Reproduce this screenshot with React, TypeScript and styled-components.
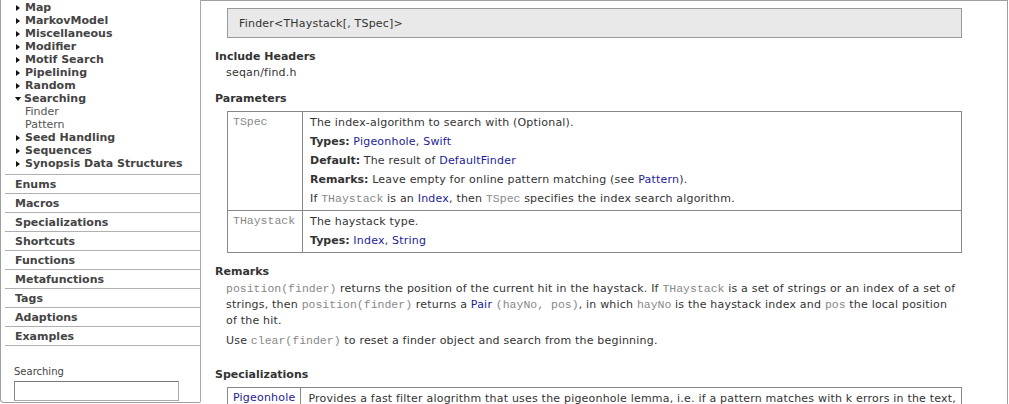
import React from "react";
import styled, { createGlobalStyle } from "styled-components";

const Global = createGlobalStyle`
  html, body { margin: 0; padding: 0; background: #fff; }
  body { font-family: "DejaVu Sans", Verdana, sans-serif; font-size: 11px; color: #333; }
  * { box-sizing: border-box; }
`;

const Page = styled.div`
  display: flex;
  width: 1009px;
  height: 404px;
  overflow: hidden;
`;

const Sidebar = styled.nav`
  width: 201px;
  height: 403px;
  flex: none;
  display: flex;
  flex-direction: column;
  border-left: 1px solid #a0a0a0;
  border-right: 1px solid #a8a8a8;
  border-bottom: 1px solid #a0a0a0;
  border-bottom-left-radius: 4px;
  border-bottom-right-radius: 2px;
`;

const Tree = styled.ul`
  list-style: none;
  margin: 0 0 0 4px;
  padding: 1px 0 4px 0;
  border-bottom: 1px solid #b0b0b0;
`;

const TreeItem = styled.li<{ $sub?: boolean }>`
  display: flex;
  align-items: center;
  height: 13px;
  line-height: 13px;
  padding-left: ${(p) => (p.$sub ? "20px" : "11px")};
  font-weight: ${(p) => (p.$sub ? "normal" : "bold")};
  color: ${(p) => (p.$sub ? "#555" : "#444")};
  white-space: nowrap;
`;

const Arrow = styled.span<{ $open?: boolean }>`
  display: inline-block;
  width: 0;
  height: 0;
  margin-right: 5px;
  ${(p) =>
    p.$open
      ? `border-left: 3.5px solid transparent; border-right: 3.5px solid transparent; border-top: 4px solid #111; margin-left: -1px; margin-right: 3px;`
      : `border-top: 3.5px solid transparent; border-bottom: 3.5px solid transparent; border-left: 4px solid #111; margin-left: 0; margin-right: 5px;`}
`;

const CatList = styled.ul`
  list-style: none;
  margin: 0 0 0 4px;
  padding: 0;
`;

const CatItem = styled.li`
  height: 19px;
  padding: 2px 0 0 10px;
  line-height: 16px;
  font-weight: bold;
  color: #444;
  border-bottom: 1px solid #b0b0b0;
`;

const SearchBox = styled.div`
  margin-top: 19px;
  padding-left: 13px;
  display: flex;
  flex-direction: column;
  gap: 3px;
`;

const SearchLabel = styled.label`
  font-size: 10px;
  line-height: 13px;
  color: #444;
`;

const SearchInput = styled.input`
  width: 165px;
  height: 20px;
  border: 1px solid #aaa;
  border-top-color: #777;
  border-left-color: #888;
  background: #fff;
  margin: 0;
  padding: 0;
`;

const Main = styled.main`
  flex: 1;
  height: 404px;
  margin-right: 1px;
  border-top: 1px solid #a0a0a0;
  border-right: 1px solid #a0a0a0;
  padding: 7px 45px 0 14px;
  overflow: hidden;
  letter-spacing: 0.2px;
`;

const TitleBox = styled.div`
  margin-left: 12px;
  height: 30px;
  background: #e9e9e9;
  border: 1px solid #999;
  padding-left: 11px;
  display: flex;
  align-items: center;
  font-size: 11px;
  color: #333;
`;

const Heading = styled.h3<{ $top?: number }>`
  margin: ${(p) => p.$top ?? 12}px 0 0 0;
  font-size: 11px;
  line-height: 14px;
  font-weight: bold;
  color: #333;
  letter-spacing: 0;
`;

const Block = styled.div`
  margin: 2px 2px 0 11px;
`;

const Plain = styled.div`
  line-height: 14px;
`;

const Para = styled.p`
  margin: 0 0 4px 0;
  line-height: 16px;
`;

const Table = styled.table`
  margin: 5px 0 0 12px;
  width: 735px;
  border-collapse: collapse;
  border: 1px solid #888;
`;

const Row = styled.tr`
  border-bottom: 1px solid #888;
`;

const KeyCell = styled.td<{ $w: number }>`
  width: ${(p) => p.$w}px;
  vertical-align: top;
  border-right: 1px solid #888;
  padding: 2px 5px 0 5px;
  line-height: 15px;
`;

const ValCell = styled.td`
  vertical-align: top;
  padding: 3px 4px 0 7px;
`;

const CellLine = styled.p`
  margin: 0 0 4px 0;
  line-height: 15px;
`;

const Code = styled.code`
  font-family: "Liberation Mono", "Courier New", monospace;
  font-size: 11.5px;
  letter-spacing: 0;
  color: #888;
`;

const Link = styled.a`
  color: #1c1c98;
  text-decoration: none;
`;

const Label = styled.b`
  color: #333;
  letter-spacing: 0;
`;

const tree: { label: string; open?: boolean; sub?: boolean }[] = [
  { label: "Map" },
  { label: "MarkovModel" },
  { label: "Miscellaneous" },
  { label: "Modifier" },
  { label: "Motif Search" },
  { label: "Pipelining" },
  { label: "Random" },
  { label: "Searching", open: true },
  { label: "Finder", sub: true },
  { label: "Pattern", sub: true },
  { label: "Seed Handling" },
  { label: "Sequences" },
  { label: "Synopsis Data Structures" },
];

const cats = [
  "Enums",
  "Macros",
  "Specializations",
  "Shortcuts",
  "Functions",
  "Metafunctions",
  "Tags",
  "Adaptions",
  "Examples",
];

export default function App() {
  return (
    <>
      <Global />
      <Page>
        <Sidebar>
          <Tree>
            {tree.map((t) => (
              <TreeItem key={t.label} $sub={t.sub}>
                {!t.sub && <Arrow $open={t.open} />}
                {t.label}
              </TreeItem>
            ))}
          </Tree>
          <CatList>
            {cats.map((c) => (
              <CatItem key={c}>{c}</CatItem>
            ))}
          </CatList>
          <SearchBox>
            <SearchLabel>Searching</SearchLabel>
            <SearchInput type="text" />
          </SearchBox>
        </Sidebar>
        <Main>
          <TitleBox>Finder&lt;THaystack[, TSpec]&gt;</TitleBox>

          <Heading>Include Headers</Heading>
          <Block>
            <Plain>seqan/find.h</Plain>
          </Block>

          <Heading>Parameters</Heading>
          <Table>
            <tbody>
              <Row>
                <KeyCell $w={75}>
                  <Code>TSpec</Code>
                </KeyCell>
                <ValCell>
                  <CellLine>The index-algorithm to search with (Optional).</CellLine>
                  <CellLine>
                    <Label>Types:</Label> <Link>Pigeonhole</Link>, <Link>Swift</Link>
                  </CellLine>
                  <CellLine>
                    <Label>Default:</Label> The result of <Link>DefaultFinder</Link>
                  </CellLine>
                  <CellLine>
                    <Label>Remarks:</Label> Leave empty for online pattern matching (see{" "}
                    <Link>Pattern</Link>).
                  </CellLine>
                  <CellLine>
                    If <Code>THaystack</Code> is an <Link>Index</Link>, then <Code>TSpec</Code>{" "}
                    specifies the index search algorithm.
                  </CellLine>
                </ValCell>
              </Row>
              <Row>
                <KeyCell $w={75}>
                  <Code>THaystack</Code>
                </KeyCell>
                <ValCell>
                  <CellLine>The haystack type.</CellLine>
                  <CellLine>
                    <Label>Types:</Label> <Link>Index</Link>, <Link>String</Link>
                  </CellLine>
                </ValCell>
              </Row>
            </tbody>
          </Table>

          <Heading $top={12}>Remarks</Heading>
          <Block>
            <Para>
              <Code>position(finder)</Code> returns the position of the current hit in the
              haystack. If <Code>THaystack</Code> is a set of strings or an index of a set of
              strings, then <Code>position(finder)</Code> returns a <Link>Pair</Link>{" "}
              <Code>(hayNo, pos)</Code>, in which <Code>hayNo</Code> is the haystack index and{" "}
              <Code>pos</Code> the local position of the hit.
            </Para>
            <Para>
              Use <Code>clear(finder)</Code> to reset a finder object and search from the
              beginning.
            </Para>
          </Block>

          <Heading $top={19}>Specializations</Heading>
          <Table>
            <tbody>
              <Row>
                <KeyCell $w={72}>
                  <Link>Pigeonhole</Link>
                </KeyCell>
                <ValCell>
                  <CellLine>
                    Provides a fast filter alogrithm that uses the pigeonhole lemma, i.e. if a
                    pattern matches with k errors in the text, every partition of the pattern
                    into k+1 parts must match exactly.
                  </CellLine>
                </ValCell>
              </Row>
            </tbody>
          </Table>
        </Main>
      </Page>
    </>
  );
}
